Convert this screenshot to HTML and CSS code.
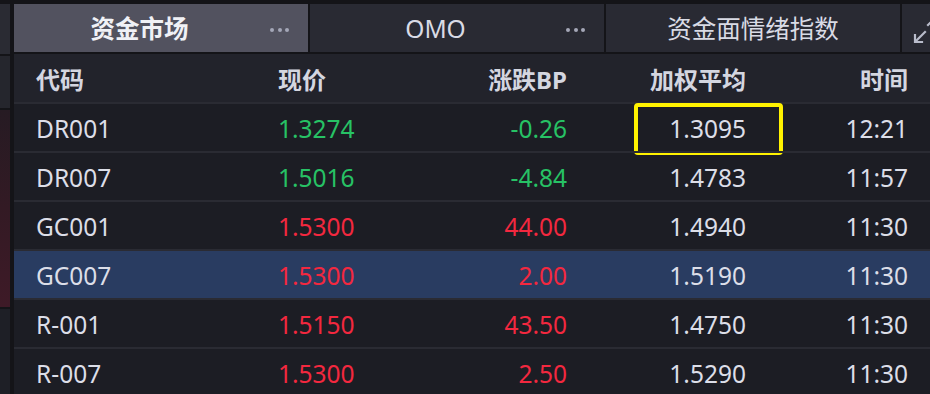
FILE: index.html
```html
<!DOCTYPE html>
<html lang="zh-CN">
<head>
<meta charset="utf-8">
<title>资金市场</title>
<link rel="stylesheet" href="styles.css">
</head>
<body>
<div class="screen">
  <div class="side">
    <div class="side-tab"></div>
    <div class="side-head"></div>
    <div class="side-glow"></div>
    <div class="side-rest"></div>
  </div>
  <div class="panel">
    <div class="tabs">
      <div class="tab active"><span class="tab-label">资金市场</span><span class="dots"><i></i><i></i><i></i></span></div>
      <div class="tab"><span class="tab-label">OMO</span><span class="dots"><i></i><i></i><i></i></span></div>
      <div class="tab"><span class="tab-label">资金面情绪指数</span></div>
      <div class="tab tab-icon">
        <svg class="expand" width="28" height="40" viewBox="0 0 28 40">
          <g fill="none" stroke="#b9bccb" stroke-width="2.2" stroke-linecap="square">
            <path d="M23 20 L14 29"/>
            <path d="M13 23 L13 30 L20 30"/>
            <path d="M26 13 L35 4"/>
          </g>
        </svg>
      </div>
    </div>
    <div class="table">
      <div class="row head">
        <div class="c c1">代码</div>
        <div class="c c2">现价</div>
        <div class="c c3">涨跌BP</div>
        <div class="c c4">加权平均</div>
        <div class="c c5">时间</div>
      </div>
      <div class="row">
        <div class="c c1">DR001</div>
        <div class="c c2 up">1.3274</div>
        <div class="c c3 up">-0.26</div>
        <div class="c c4">1.3095</div>
        <div class="c c5">12:21</div>
        <span class="mark"></span>
      </div>
      <div class="row">
        <div class="c c1">DR007</div>
        <div class="c c2 up">1.5016</div>
        <div class="c c3 up">-4.84</div>
        <div class="c c4">1.4783</div>
        <div class="c c5">11:57</div>
      </div>
      <div class="row">
        <div class="c c1">GC001</div>
        <div class="c c2 down">1.5300</div>
        <div class="c c3 down">44.00</div>
        <div class="c c4">1.4940</div>
        <div class="c c5">11:30</div>
      </div>
      <div class="row selected">
        <div class="c c1">GC007</div>
        <div class="c c2 down">1.5300</div>
        <div class="c c3 down">2.00</div>
        <div class="c c4">1.5190</div>
        <div class="c c5">11:30</div>
      </div>
      <div class="row">
        <div class="c c1">R-001</div>
        <div class="c c2 down">1.5150</div>
        <div class="c c3 down">43.50</div>
        <div class="c c4">1.4750</div>
        <div class="c c5">11:30</div>
      </div>
      <div class="row">
        <div class="c c1">R-007</div>
        <div class="c c2 down">1.5300</div>
        <div class="c c3 down">2.50</div>
        <div class="c c4">1.5290</div>
        <div class="c c5">11:30</div>
      </div>
    </div>
  </div>
</div>
</body>
</html>
```

FILE: styles.css
```css
* { box-sizing: border-box; }
html, body {
  margin: 0;
  padding: 0;
  background: #141418;
  overflow: hidden;
}
body {
  width: 930px;
  height: 394px;
  font-family: "Noto Sans", "Noto Sans CJK SC", sans-serif;
  color: #dcdee8;
}
.screen {
  display: flex;
  gap: 4px;
  height: 394px;
  padding-top: 4px;
}
.side {
  width: 10px;
  display: flex;
  flex-direction: column;
}
.side-tab { height: 50px; background: #2a2b33; }
.side-head { height: 52px; margin-top: 2px; background: #25262d; }
.side-glow {
  height: 197px;
  margin-top: 2px;
  background: linear-gradient(180deg, #261b23 0%, #331a24 50%, #3e1a27 100%);
}
.side-rest { flex: 1; margin-top: 2px; background: #1e1f26; }

.panel {
  flex: 1;
  min-width: 0;
  display: flex;
  flex-direction: column;
  overflow: hidden;
}
.tabs {
  display: flex;
  gap: 2px;
  height: 50px;
}
.tab {
  flex: 0 0 294px;
  display: flex;
  align-items: center;
  padding-top: 3px;
  background: #292a33;
  font-size: 24.5px;
  color: #d9dbe5;
}
.tab.active {
  background: #52525f;
  font-weight: 700;
  color: #f0f1f6;
}
.tab-label {
  flex: 1;
  text-align: center;
  line-height: 1;
}
.dots {
  width: 43px;
  padding-left: 5px;
  display: flex;
  gap: 3.5px;
  align-items: center;
}
.dots i {
  width: 4px;
  height: 4px;
  border-radius: 50%;
  background: #a4a7b8;
}
.tab-icon {
  flex: 1 0 40px;
  overflow: hidden;
  align-items: flex-start;
  padding-top: 0;
}
.expand { display: block; margin-top: 8px; }

.table {
  flex: 1;
  margin-top: 2px;
  background: #1c1d24;
}
.row {
  position: relative;
  display: grid;
  grid-template-columns: 242px 150px 139px 179px 162px;
  padding: 4px 22px 0;
  height: 49px;
  border-top: 2px solid #2a2b33;
  align-items: center;
  font-size: 24.5px;
}
.row.head {
  height: 48px;
  border-top: 0;
  background: #22232b;
  font-weight: 700;
  font-size: 24px;
  color: #d4d6e0;
}
.row.selected { background: #293c61; }
.c { line-height: 1; white-space: nowrap; }
.c1, .c2 { text-align: left; }
.c3, .c4, .c5 { text-align: right; }
.up { color: #27c265; }
.down { color: #f3283f; }
.mark {
  position: absolute;
  left: 620px;
  top: -1px;
  width: 149px;
  height: 52px;
  border: 4px solid #fff200;
  border-radius: 4px;
}
```
